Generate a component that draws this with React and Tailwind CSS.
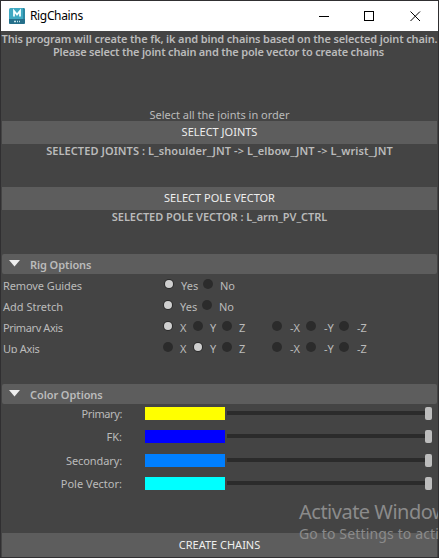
import React from 'react';

function Line({ children, className = '' }) {
  return <div className={`flex shrink-0 justify-center whitespace-pre leading-[13px] ${className}`}>{children}</div>;
}

function BarButton({ children, className = '' }) {
  return (
    <button className={`mx-px block shrink-0 bg-[#5d5d5d] text-center text-[#eeeeee] ${className}`}>
      {children}
    </button>
  );
}

function FrameHeader({ children }) {
  return (
    <div className="mx-px flex h-5 shrink-0 items-center rounded-[2px] bg-[#5d5d5d] pl-[7px] font-semibold">
      <svg className="-mt-[2px] h-[7px] w-[11px]" viewBox="0 0 11 7">
        <path d="M0 0H11L5.5 6.5Z" fill="#eeeeee" />
      </svg>
      <span className="ml-[10px] mt-px leading-[17px] tracking-[-0.08px]">{children}</span>
    </div>
  );
}

function Radio({ on, label, width = '', gap }) {
  return (
    <label className={`flex h-full items-start ${width}`}>
      <span className="mt-[5px] flex size-[10px] shrink-0 items-center justify-center rounded-full bg-[#2b2b2b]">
        {on && <span className="size-2 rounded-full bg-[#cfcfcf]" />}
      </span>
      <span className={`mt-[5px] leading-[14px] ${gap}`}>{label}</span>
    </label>
  );
}

function OptionRow({ label, spacing = '', start = '', children }) {
  return (
    <div className="flex h-[21px] pl-[2px]">
      <span className={`mt-[5px] w-[160px] shrink-0 leading-[14px] ${spacing}`}>{label}</span>
      <div className={`flex ${start}`}>{children}</div>
    </div>
  );
}

function AxisRow({ label, spacing, selected }) {
  return (
    <div className="flex h-[21px] pl-[2px]">
      <span className={`mt-[5px] h-[11px] w-[160px] shrink-0 overflow-hidden leading-[14px] ${spacing}`}>{label}</span>
      <div className="flex">
        <Radio on={selected === 'X'} label="X" width="w-[30px]" gap="ml-[7px]" />
        <Radio on={selected === 'Y'} label="Y" width="w-[29px]" gap="ml-[7px]" />
        <Radio on={selected === 'Z'} label="Z" width="w-[50px]" gap="ml-[7px]" />
        <Radio label="-X" width="w-[34px]" gap="ml-[8px]" />
        <Radio label="-Y" width="w-[33px]" gap="ml-[8px]" />
        <Radio label="-Z" width="w-[34px]" gap="ml-[8px]" />
      </div>
    </div>
  );
}

function ColorRow({ label, color, height, spacing = '' }) {
  return (
    <div className={`flex items-start ${height}`}>
      <span className={`-mt-px w-[121px] text-right leading-[15px] ${spacing}`}>{label}</span>
      <span className={`ml-[23px] h-[13px] w-20 ${color}`} />
      <span className="ml-[2px] mt-1 h-1 w-[198px] bg-[#2b2b2b]" />
      <span className="h-[13px] w-[7px] rounded-[2px] bg-[#bdbdbd]" />
    </div>
  );
}

export default function App() {
  return (
    <div className="relative flex h-[558px] w-[439px] flex-col overflow-hidden border border-[#302f31] bg-[#444444] font-['Noto_Sans','Open_Sans',sans-serif] text-[11px] text-[#bbbbbb]">
      <header className="flex h-[30px] shrink-0 items-center bg-white text-black">
        <svg className="ml-[8px] h-4 w-4" viewBox="0 0 16 16">
          <rect width="16" height="16" rx="1.5" fill="#3fa9c2" />
          <path d="M0 11H16V14.5Q16 16 14.5 16H1.5Q0 16 0 14.5Z" fill="#256f8a" />
          <path d="M14 0H14.5Q16 0 16 1.5V11H14Z" fill="#2b88a3" />
          <path d="M5 8.5V3L8 6.5L11 3V8.5" fill="none" stroke="#f4ffff" strokeWidth="1.8" />
          <path d="M5 13.5H7M8 13.5H9M10 13.5H11" stroke="#c5e3ea" strokeWidth="1.5" />
        </svg>
        <span className="ml-[5px] text-[12px] tracking-[-0.35px]">RigChains</span>
        <svg className="ml-auto mr-[17px] h-[11px] w-[102px]" viewBox="0 0 102 11" fill="none" stroke="#000">
          <path d="M0 5.5H10" />
          <rect x="45.5" y="0.5" width="9" height="9" />
          <path d="M91.5 0.5L101 10M101 0.5L91.5 10" />
        </svg>
      </header>
      <Line className="mt-px font-semibold tracking-[-0.15px]">This program will create the fk, ik and bind chains based on the selected joint chain.</Line>
      <Line className="pr-[2px] font-semibold tracking-[-0.2px]">Please select the joint chain and the pole vector to create chains</Line>
      <Line className="mt-[50px]">Select all the joints in order</Line>
      <BarButton className="h-[23px]">SELECT JOINTS</BarButton>
      <Line className="font-semibold tracking-[0.07px]">{'SELECTED JOINTS : L_shoulder_JNT -> L_elbow_JNT -> L_wrist_JNT'}</Line>
      <BarButton className="mt-[30px] h-[23px]">SELECT POLE VECTOR</BarButton>
      <Line className="font-semibold tracking-[-0.06px]">SELECTED POLE VECTOR : L_arm_PV_CTRL</Line>
      <div className="h-[31px] shrink-0" />
      <FrameHeader>Rig Options</FrameHeader>
      <div className="flex h-[110px] shrink-0 flex-col">
        <OptionRow label="Remove Guides" start="pl-px" spacing="tracking-[-0.1px]">
          <Radio on label="Yes" width="w-[39px]" gap="ml-[7px]" />
          <Radio label="No" gap="ml-[7px]" />
        </OptionRow>
        <OptionRow label="Add Stretch">
          <Radio on label="Yes" width="w-[39px]" gap="ml-[7px]" />
          <Radio label="No" gap="ml-[7px]" />
        </OptionRow>
        <AxisRow label="Primary Axis" selected="X" spacing="tracking-[-0.4px]" />
        <AxisRow label="Up Axis" selected="Y" spacing="tracking-[-0.3px]" />
      </div>
      <FrameHeader>Color Options</FrameHeader>
      <div className="flex h-[129px] shrink-0 flex-col pt-[3px]">
        <ColorRow label="Primary:" color="bg-[#ffff00]" height="h-[23px]" spacing="tracking-[-0.4px]" />
        <ColorRow label="FK:" color="bg-[#0000ff]" height="h-[24px]" />
        <ColorRow label="Secondary:" color="bg-[#007fff]" height="h-[23px]" spacing="tracking-[-0.1px]" />
        <ColorRow label="Pole Vector:" color="bg-[#00ffff]" height="h-[23px]" />
      </div>
      <BarButton className="h-[24px]">CREATE CHAINS</BarButton>
      <div className="absolute left-[298px] top-[498px] whitespace-nowrap text-[#8b8b8b]">
        <div className="text-[20px] leading-[25px] tracking-[-0.5px]">Activate Windows</div>
        <div className="text-[14px] leading-[20px] tracking-[0.15px]">Go to Settings to activate Windows.</div>
      </div>
    </div>
  );
}
